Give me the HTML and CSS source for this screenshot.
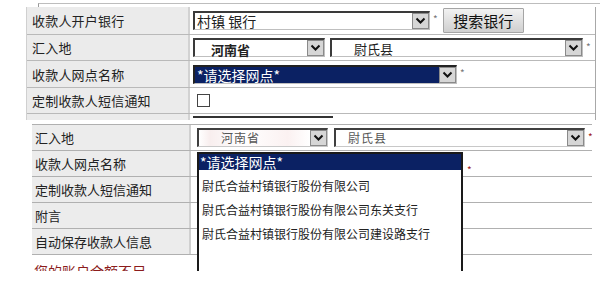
FILE: index.html
```html
<!DOCTYPE html>
<html lang="zh">
<head>
<meta charset="utf-8">
<link rel="stylesheet" href="styles.css">
</head>
<body>
<div class="page">
  <div class="topline"></div>
  <div class="p1">
    <div class="row r28">
      <div class="lab">收款人开户银行</div>
      <div class="val">
        <div class="sel w237"><span class="txt big">村镇 银行</span><span class="arr"><svg width="11" height="8" viewBox="0 0 11 8"><path d="M1.5 1.5 L5.5 5.5 L9.5 1.5" fill="none" stroke="#111" stroke-width="2"/></svg></span></div>
        <span class="star g">*</span>
        <button class="btn">搜索银行</button>
      </div>
    </div>
    <div class="row r26">
      <div class="lab">汇入地</div>
      <div class="val">
        <div class="sel w132"><span class="txt bold pad">河南省</span><span class="arr"><svg width="11" height="8" viewBox="0 0 11 8"><path d="M1.5 1.5 L5.5 5.5 L9.5 1.5" fill="none" stroke="#111" stroke-width="2"/></svg></span></div>
        <div class="sel w253 ml5"><span class="txt pad2">尉氏县</span><span class="arr"><svg width="11" height="8" viewBox="0 0 11 8"><path d="M1.5 1.5 L5.5 5.5 L9.5 1.5" fill="none" stroke="#111" stroke-width="2"/></svg></span></div>
        <span class="star g">*</span>
      </div>
    </div>
    <div class="row r27">
      <div class="lab">收款人网点名称</div>
      <div class="val">
        <div class="sel w264 blue"><span class="txt big">*请选择网点*</span><span class="arr"><svg width="11" height="8" viewBox="0 0 11 8"><path d="M1.5 1.5 L5.5 5.5 L9.5 1.5" fill="none" stroke="#111" stroke-width="2"/></svg></span></div>
        <span class="star g">*</span>
      </div>
    </div>
    <div class="row r26">
      <div class="lab">定制收款人短信通知</div>
      <div class="val"><span class="chk"></span></div>
    </div>
    <div class="row stub">
      <div class="lab"></div>
      <div class="val"><span class="stubline"></span></div>
    </div>
  </div>

  <div class="p2">
    <div class="row2">
      <div class="lab2">汇入地</div>
      <div class="val2">
        <div class="sel2 w131"><span class="txt light pad3">河南省</span><span class="arr"><svg width="11" height="8" viewBox="0 0 11 8"><path d="M1.5 1.5 L5.5 5.5 L9.5 1.5" fill="none" stroke="#111" stroke-width="2"/></svg></span></div>
        <div class="sel2 w251 ml6"><span class="txt light pad4">尉氏县</span><span class="arr"><svg width="11" height="8" viewBox="0 0 11 8"><path d="M1.5 1.5 L5.5 5.5 L9.5 1.5" fill="none" stroke="#111" stroke-width="2"/></svg></span></div>
        <span class="star r">*</span>
      </div>
    </div>
    <div class="row2"><div class="lab2">收款人网点名称</div><div class="val2"></div></div>
    <div class="row2"><div class="lab2">定制收款人短信通知</div><div class="val2"></div></div>
    <div class="row2"><div class="lab2">附言</div><div class="val2"></div></div>
    <div class="row2"><div class="lab2">自动保存收款人信息</div><div class="val2"></div></div>
    <div class="warn">您的账户余额不足</div>

    <div class="list">
      <div class="opt hi">*请选择网点*</div>
      <div class="opt">尉氏合益村镇银行股份有限公司</div>
      <div class="opt">尉氏合益村镇银行股份有限公司东关支行</div>
      <div class="opt">尉氏合益村镇银行股份有限公司建设路支行</div>
    </div>
    <span class="star r liststar">*</span>
  </div>
</div>
</body>
</html>
```
FILE: styles.css
```css
* { box-sizing: border-box; }
html, body { margin: 0; padding: 0; background: #fff; }
body {
  font-family: "Noto Sans CJK SC", "Noto Sans", sans-serif;
  color: #222;
  font-size: 13px;
}
.page { height: 271px; overflow: hidden; padding-top: 3px; }

.topline {
  margin-left: 38px;
  width: 562px;
  height: 4px;
  border-top: 1px solid #bdbdbd;
  border-left: 1px solid #9a9a9a;
}

.p1 {
  margin-left: 26px;
  width: 570px;
  border-right: 1px solid #a8a8a8;
  border-left: 1px solid #d0d0d0;
}
.row {
  display: grid;
  grid-template-columns: 163px 1fr;
  border-bottom: 1px solid #b9b9b9;
}
.r28 { height: 28px; }
.r26 { height: 26px; }
.r27 { height: 27px; }
.stub { height: 6px; border-bottom: none; }
.lab {
  background: #ebebeb;
  border-right: 2px solid #d2d2d2;
  padding-left: 5px;
  display: flex;
  align-items: center;
  line-height: 1;
  letter-spacing: 0.2px;
}
.val {
  display: flex;
  align-items: center;
  padding-left: 3px;
}
.stubline {
  align-self: flex-start;
  margin-top: 2px;
  width: 140px;
  height: 2px;
  background: #333;
}

.sel {
  height: 19px;
  display: flex;
  align-items: stretch;
  border-top: 2px solid #3a3a3a;
  border-left: 2px solid #3a3a3a;
  border-right: 1px solid #bfbfbf;
  border-bottom: 1px solid #bfbfbf;
  background: #fff;
}
.sel .txt {
  flex: 1;
  display: flex;
  align-items: center;
  padding-left: 2px;
  white-space: nowrap;
  line-height: 1;
}
.big { font-size: 14px; }
.bold { font-weight: bold; font-size: 13px; }
.pad { padding-left: 16px !important; padding-top: 3px; }
.pad2 { padding-left: 22px !important; }
.arr {
  width: 17px;
  background: #d6d6d6;
  border: 1px solid #8a8a8a;
  display: flex;
  align-items: center;
  justify-content: center;
}
.w237 { width: 237px; }
.w132 { width: 132px; }
.w253 { width: 253px; }
.w264 { width: 264px; }
.ml5 { margin-left: 5px; }
.blue .txt { background: #0b2163; color: #fff; }
.blue { border-top-color: #222; border-left-color: #222; }

.star { font-size: 10px; line-height: 1; align-self: flex-start; margin-top: 7px; margin-left: 3px; }
.star.g { color: #777; }
.star.r { color: #a01818; }

.btn {
  margin-left: 5px;
  width: 81px;
  height: 25px;
  font-family: "Noto Sans CJK SC", sans-serif;
  font-size: 15px;
  color: #111;
  background: linear-gradient(#f2f2f2, #cfcfcf);
  border: 1px solid #a5a5a5;
  border-radius: 1px;
  padding: 0;
}

.chk {
  margin-left: 4px;
  width: 13px;
  height: 13px;
  border: 1px solid #444;
  background: #fff;
}

.p2 {
  position: relative;
  margin-top: 4px;
  margin-left: 32px;
  width: 560px;
  border-top: 1px solid #b0b0b0;
}
.row2 {
  display: grid;
  grid-template-columns: 159px 1fr;
  height: 26px;
  border-bottom: 1px solid #b0b0b0;
}
.lab2 {
  background: #ececec;
  border-right: 2px solid #d0d0d0;
  padding-left: 3px;
  display: flex;
  align-items: center;
  font-size: 13px;
  line-height: 1;
}
.val2 {
  display: flex;
  align-items: center;
  padding-left: 6px;
}
.sel2 {
  height: 19px;
  display: flex;
  border-top: 2px solid #3f3f3f;
  border-left: 2px solid #3f3f3f;
  border-right: 1px solid #c8c8c8;
  border-bottom: 1px solid #c8c8c8;
  background: #fff;
}
.sel2 .txt {
  flex: 1;
  display: flex;
  align-items: center;
  line-height: 1;
}
.light { color: #555; font-size: 12px; letter-spacing: 1px; }
.pad3 { padding-left: 22px; background: linear-gradient(90deg, #fff 0, #f8eeee 10%, #fff 40%, #fbf1f1 80%, #fff 100%); }
.pad4 { padding-left: 12px; }
.w131 { width: 131px; }
.w251 { width: 251px; }
.ml6 { margin-left: 6px; }

.warn {
  margin-top: 9px;
  padding-left: 2px;
  color: #8b1c1c;
  font-size: 14px;
  line-height: 1;
}

.list {
  position: absolute;
  left: 165px;
  top: 27px;
  width: 266px;
  height: 130px;
  background: #fff;
  border: 2px solid #1a1a1a;
  border-bottom: none;
}
.opt {
  height: 24px;
  padding-left: 3px;
  font-size: 12px;
  display: flex;
  align-items: center;
  white-space: nowrap;
  color: #222;
}
.opt.hi {
  height: 16px;
  background: #0b2163;
  color: #fff;
  font-size: 14px;
  padding-left: 1px;
  margin-bottom: 3px;
}
.liststar {
  position: absolute;
  left: 432px;
  top: 33px;
}
```
